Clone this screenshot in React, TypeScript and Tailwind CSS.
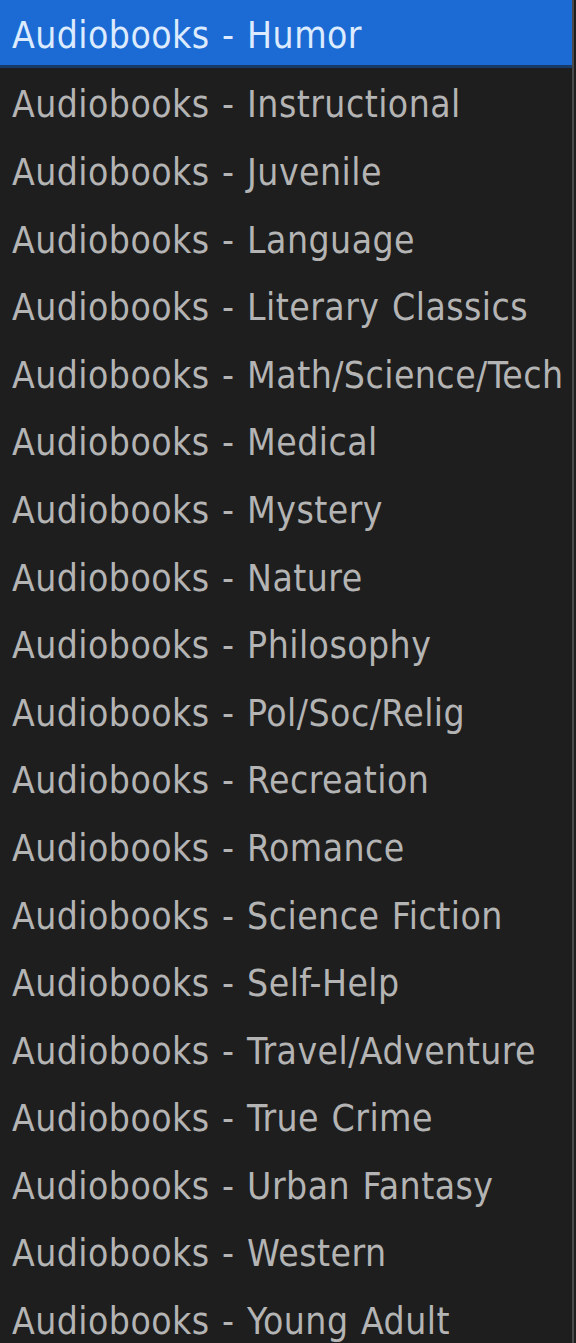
const GENRES = [
  "Humor",
  "Instructional",
  "Juvenile",
  "Language",
  "Literary Classics",
  "Math/Science/Tech",
  "Medical",
  "Mystery",
  "Nature",
  "Philosophy",
  "Pol/Soc/Relig",
  "Recreation",
  "Romance",
  "Science Fiction",
  "Self-Help",
  "Travel/Adventure",
  "True Crime",
  "Urban Fantasy",
  "Western",
  "Young Adult",
];

export default function App() {
  return (
    <div className="h-[1343px] w-[576px] overflow-hidden bg-[#1e1e1e]">
      <ul className="w-[574px] border-r-2 border-[#4a4a4a] font-['DejaVu_Sans_Condensed','DejaVu_Sans',sans-serif] text-[37px] leading-none tracking-[0.45px] [word-spacing:1.5px]">
        {GENRES.map((g, i) => (
          <li
            key={g}
            className={
              i === 0
                ? "flex h-[67.6px] items-center border-b-[3px] border-[#173a66] bg-[#1c6bd4] pl-3 pt-[7px] text-[#dcebff]"
                : "flex h-[67.6px] items-center pl-3 pt-[7px] text-[#b4b4b4]"
            }
          >
            Audiobooks - {g}
          </li>
        ))}
      </ul>
    </div>
  );
}
